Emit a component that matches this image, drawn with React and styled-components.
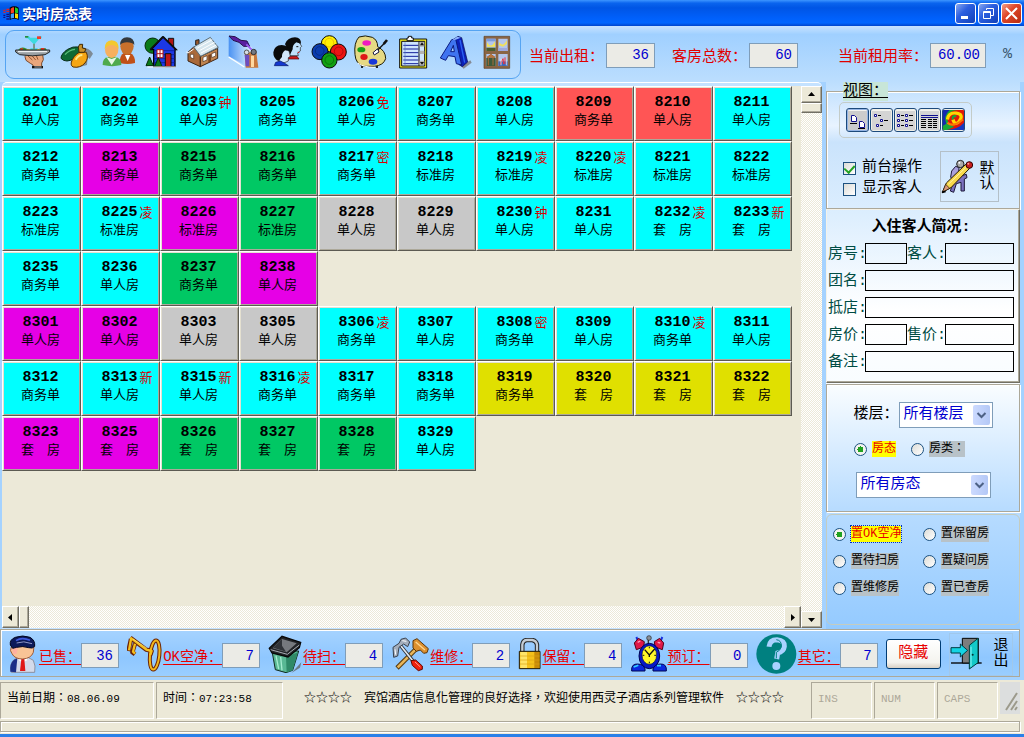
import { useState } from "react";
import styled, { createGlobalStyle, css } from "styled-components";

const TYPES = { D: "单人房", S: "商务单", B: "标准房", T: "套　房" };

const COLORS = {
  free: "#00ffff",
  sold: "#e600e6",
  clean: "#00c864",
  alert: "#ff5555",
  dirty: "#c8c8c8",
  booked: "#e0e000",
};

const floors = [
  [
    ["8201", "D"], ["8202", "S"], ["8203", "D", "free", "钟"], ["8205", "S"], ["8206", "D", "free", "免"],
    ["8207", "S"], ["8208", "D"], ["8209", "S", "alert"], ["8210", "D", "alert"], ["8211", "D"],
    ["8212", "S"], ["8213", "S", "sold"], ["8215", "S", "clean"], ["8216", "S", "clean"], ["8217", "S", "free", "密"],
    ["8218", "B"], ["8219", "B", "free", "凌"], ["8220", "B", "free", "凌"], ["8221", "B"], ["8222", "B"],
    ["8223", "B"], ["8225", "B", "free", "凌"], ["8226", "B", "sold"], ["8227", "B", "clean"], ["8228", "D", "dirty"],
    ["8229", "D", "dirty"], ["8230", "D", "free", "钟"], ["8231", "D"], ["8232", "T", "free", "凌"], ["8233", "T", "free", "新"],
    ["8235", "S"], ["8236", "D"], ["8237", "S", "clean"], ["8238", "D", "sold"],
  ],
  [
    ["8301", "D", "sold"], ["8302", "D", "sold"], ["8303", "D", "dirty"], ["8305", "D", "dirty"], ["8306", "S", "free", "凌"],
    ["8307", "D"], ["8308", "S", "free", "密"], ["8309", "D"], ["8310", "S", "free", "凌"], ["8311", "D"],
    ["8312", "S"], ["8313", "D", "free", "新"], ["8315", "D", "free", "新"], ["8316", "S", "free", "凌"], ["8317", "S"],
    ["8318", "S"], ["8319", "S", "booked"], ["8320", "T", "booked"], ["8321", "T", "booked"], ["8322", "T", "booked"],
    ["8323", "T", "sold"], ["8325", "T", "sold"], ["8326", "T", "clean"], ["8327", "T", "clean"], ["8328", "T", "clean"],
    ["8329", "D"],
  ],
];

/* ---------- icons ---------- */

const FlagIcon = () => (
  <svg width="17" height="16" viewBox="3 12 51 48">
    <path d="M26 20Q40 12 53 20V57Q40 49 26 57Z" fill="#000" />
    <path d="M29 23Q34 19 39 19V35Q34 35 29 38Z" fill="#ff4020" />
    <path d="M42 19Q46 20 51 23V37Q46 35 42 35Z" fill="#20d020" />
    <path d="M29 40Q34 37 39 37V51Q34 51 29 53Z" fill="#40a0ff" />
    <path d="M42 37Q46 37 51 39V53Q46 51 42 51Z" fill="#ffe000" />
    <path d="M7 28h6m3-3h9M7 34h6m3-3h9" stroke="#e02020" strokeWidth="4" />
    <path d="M7 43h6m3-3h9M7 49h6m3-3h9M16 54h9" stroke="#101080" strokeWidth="4" />
  </svg>
);

const TrayIcon = () => (
  <svg width="36" height="36" viewBox="46 103 108 108">
    <path d="M78 110h10l4 4h20l6-4h8v6h-6l-14 16v14h8v4H92v-4h9v-14L84 116h-6Z" fill="#3ddbe0" />
    <path d="M76 109h10v5H76Z" fill="#2a8c3c" />
    <path d="M112 110h12v8h-12Z" fill="#f03c28" />
    <path d="M101 132h4v16h-4Z" fill="#8a7a60" />
    <path d="M56 150Q62 142 74 144L88 150H114Q124 142 138 146L142 152H56Z" fill="#2f8f2f" />
    <path d="M62 146h8v5h-8ZM124 145h10v6h-10Z" fill="#e03020" />
    <path d="M80 149h10v4H80ZM112 148h10v4h-10Z" fill="#f0d030" />
    <path d="M80 165L76 171 79 182 92 191 100 196V201H126V190L131 180 129 165Z" fill="#e9a67c" stroke="#7c4a2a" strokeWidth="3" />
    <path d="M84 168L98 181M96 167L108 181M109 166L115 180" stroke="#8e5632" strokeWidth="3" />
    <path d="M48 151H150V157L136 165Q98 172 60 165L48 157Z" fill="#9aa0a4" stroke="#26282a" strokeWidth="3" />
    <path d="M55 156H142" stroke="#fff" strokeWidth="3" />
    <path d="M97 199H130V206H97Z" fill="#111" />
    <path d="M104 202H126" stroke="#fff" strokeWidth="2" />
  </svg>
);

const LemonIcon = () => (
  <svg width="36" height="36" viewBox="190 103 108 108">
    <path d="M254 142Q282 144 292 162L282 178 276 172 274 196 240 205 256 180Z" fill="#7e8b96" />
    <path d="M196 176Q196 162 216 149Q232 139 248 142Q260 150 252 162Q236 182 214 184Q202 184 196 176Z" fill="#0e6a34" stroke="#0a2d1a" strokeWidth="3" />
    <path d="M208 165Q220 151 238 149" stroke="#5fc07b" strokeWidth="4" fill="none" />
    <path d="M272 158Q280 176 268 190Q254 206 232 202Q222 196 230 180Q240 160 258 156Z" fill="#f5a614" stroke="#5a3200" strokeWidth="3" />
    <path d="M240 180Q248 166 260 166" stroke="#ffe88a" strokeWidth="6" fill="none" />
    <path d="M248 142L252 134H261L260 145 271 148 266 158H250Z" fill="#c8902a" stroke="#3f2b06" strokeWidth="3" />
  </svg>
);

const PeopleIcon = () => (
  <svg width="36" height="36" viewBox="306 103 108 108">
    <path d="M362 190Q362 168 374 160H394Q409 168 408 190Q386 196 362 190Z" fill="#c05018" />
    <ellipse cx="384" cy="140" rx="20" ry="25" fill="#c8702c" />
    <path d="M363 136Q364 114 384 113Q406 114 406 136Q400 128 384 128Q370 128 363 136Z" fill="#34383c" />
    <path d="M378 166L386 184 394 166Z" fill="#fff" />
    <path d="M311 196Q310 175 328 171H350Q368 177 367 196Q340 203 311 196Z" fill="#4faa4d" />
    <ellipse cx="338" cy="150" rx="20" ry="25" fill="#f6b060" />
    <path d="M317 148Q317 123 338 122Q360 123 359 148Q350 136 338 136Q326 136 317 148Z" fill="#f2c830" />
    <path d="M322 172L338 196 354 172 338 178Z" fill="#e8f8e8" />
  </svg>
);

const HouseIcon = () => (
  <svg width="36" height="36" viewBox="432 103 108 108">
    <circle cx="461" cy="138" r="23" fill="#0a7a18" stroke="#052a08" strokeWidth="3" />
    <path d="M508 116H524V150H508Z" fill="#b01414" stroke="#111" strokeWidth="3" />
    <path d="M492 112L456 150H464V201H528V150H532Z" fill="#1c38e6" stroke="#000" strokeWidth="4" />
    <path d="M464 153H528M464 165H528M464 177H528M464 189H528" stroke="#081684" strokeWidth="2" />
    <path d="M492 111L454 150M492 111L532 151" stroke="#101010" strokeWidth="5" />
    <path d="M474 150H492V174H474Z" fill="#fff" stroke="#b01414" strokeWidth="3" />
    <path d="M483 150V174M474 162H492" stroke="#b01414" strokeWidth="3" />
    <path d="M499 162H516V201H499Z" fill="#c01818" stroke="#111" strokeWidth="3" />
    <path d="M452 172L441 198H463ZM478 174L467 200H489Z" fill="#0a7a18" stroke="#052a08" strokeWidth="3" />
    <path d="M445 202H530" stroke="#fff" strokeWidth="3" />
  </svg>
);

const CabinIcon = () => (
  <svg width="36" height="36" viewBox="558 103 108 108">
    <path d="M590 122V136H600V120Z" fill="#9b5a2c" stroke="#222" strokeWidth="3" />
    <path d="M567 158L584 142 604 166V201L567 184Z" fill="#a9693a" stroke="#3c2413" strokeWidth="3" />
    <path d="M604 170L656 146V176L604 201Z" fill="#c08450" stroke="#3c2413" strokeWidth="3" />
    <path d="M584 142L634 113 658 143 605 170Z" fill="#d6e6ee" stroke="#5c6e78" strokeWidth="3" />
    <path d="M595 145L640 120M601 153L647 128M606 160L652 136" stroke="#fff" strokeWidth="3" />
    <path d="M574 164H584V178L574 173ZM612 173L624 168V181L612 186ZM638 162L650 157V169L638 174Z" fill="#fff" stroke="#4c2c16" strokeWidth="2" />
    <path d="M628 166L636 163V186L628 189Z" fill="#7a431e" />
    <path d="M584 148L567 160 562 157" stroke="#fff" strokeWidth="3" fill="none" />
  </svg>
);

const BrushIcon = () => (
  <svg width="36" height="36" viewBox="688 103 108 108">
    <defs>
      <linearGradient id="sky" x1="0" x2="1">
        <stop offset="0" stopColor="#4a92f2" />
        <stop offset="1" stopColor="#e0f1ff" />
      </linearGradient>
    </defs>
    <path d="M693 110L762 142V198L738 194 693 170Z" fill="url(#sky)" />
    <path d="M693 172L740 202" stroke="#fff" strokeWidth="4" />
    <path d="M694 109L712 111 730 122 748 124 756 140 738 140 724 128 706 122Z" fill="#5a1ea0" stroke="#28104c" strokeWidth="3" />
    <path d="M746 134L762 150" stroke="#9a5cf0" strokeWidth="6" />
    <path d="M741 158H776L782 204H744Z" fill="#c8793c" />
    <path d="M741 166H755V200H744Z" fill="#6c4cc0" />
    <path d="M760 168H769V202H760Z" fill="#ffd9a0" />
    <circle cx="747" cy="158" r="7" fill="#d8dde6" stroke="#555" strokeWidth="3" />
    <circle cx="768" cy="157" r="8" fill="#737983" stroke="#333" strokeWidth="3" />
  </svg>
);

const FacesIcon = () => (
  <svg width="36" height="36" viewBox="14 103 108 108">
    <path d="M78 136Q90 118 106 130L112 140 108 144V154L100 160 102 168H76Z" fill="#bfe0fa" stroke="#222" strokeWidth="2" />
    <path d="M62 133Q70 113 92 113Q111 114 110 132L96 128Q84 136 85 149L78 163 70 152Z" fill="#0a0a0a" />
    <path d="M70 170H98L104 178H72Z" fill="#d01818" stroke="#500" strokeWidth="2" />
    <path d="M50 154Q66 146 74 154L78 170 72 174 72 184 58 190H44Z" fill="#d4e8fb" stroke="#222" strokeWidth="2" />
    <path d="M27 158Q30 137 52 136Q72 138 77 154L62 152Q52 160 53 172L42 184Q26 176 27 158Z" fill="#0a0a0a" />
    <path d="M34 188L48 184 60 190 72 198H30Z" fill="#1438d0" stroke="#061460" strokeWidth="2" />
    <path d="M96 141H102" stroke="#111" strokeWidth="3" />
    <path d="M100 158H105" stroke="#d01818" strokeWidth="3" />
  </svg>
);

const CirclesIcon = () => (
  <svg width="36" height="36" viewBox="145 104 108 108">
    <g stroke="#0a0a0a" strokeWidth="3">
      <circle cx="200" cy="133" r="24" fill="#fff000" />
      <circle cx="172" cy="157" r="24" fill="#0a3cae" />
      <circle cx="227" cy="158" r="24" fill="#ec1414" />
      <circle cx="200" cy="183" r="23" fill="#12a012" />
    </g>
    <g fill="none" strokeWidth="2">
      <circle cx="200" cy="130" r="13" stroke="#e8a800" />
      <circle cx="171" cy="155" r="13" stroke="#062470" />
      <circle cx="228" cy="156" r="13" stroke="#9a0808" />
      <circle cx="200" cy="182" r="13" stroke="#076007" />
    </g>
  </svg>
);

const PaletteIcon = () => (
  <svg width="36" height="36" viewBox="278 104 108 108">
    <path d="M305 206V200M350 200V206" stroke="#000" strokeWidth="5" />
    <path d="M296 113Q314 106 336 114Q352 122 352 142Q376 154 376 178Q370 198 342 201H310Q286 194 284 166Q280 130 296 113Z" fill="#e6d984" stroke="#1c1a08" strokeWidth="3" />
    <path d="M293 192Q310 204 344 204" stroke="#fff" strokeWidth="3" fill="none" />
    <ellipse cx="319" cy="131" rx="13" ry="8" fill="#f01cc0" />
    <ellipse cx="303" cy="151" rx="12" ry="8" fill="#18a018" />
    <ellipse cx="311" cy="173" rx="11" ry="9" fill="#e01818" />
    <ellipse cx="338" cy="187" rx="13" ry="9" fill="#1838d8" />
    <path d="M338 160L352 148 356 158 342 167Z" fill="#fff" stroke="#101040" strokeWidth="3" />
    <path d="M352 152L374 130" stroke="#111" strokeWidth="4" />
    <path d="M370 134L380 122" stroke="#111" strokeWidth="8" />
  </svg>
);

const ClipboardIcon = () => (
  <svg width="36" height="36" viewBox="402 104 108 108">
    <path d="M416 119H497V206H416Z" fill="#f4ee22" stroke="#111" strokeWidth="3" />
    <path d="M422 126H491V200H422Z" fill="#cfe6ff" stroke="#111" strokeWidth="3" />
    <path d="M438 124V116H442V111H452V116H457V124Z" fill="#fff" stroke="#111" strokeWidth="3" />
    <path d="M427 138H472M427 149H472M427 160H472M427 171H472M427 182H472M427 193H472" stroke="#14209a" strokeWidth="3" />
    <path d="M474 126V200" stroke="#111" strokeWidth="3" />
    <path d="M476 128H490V142H476ZM476 154H490V164H476ZM476 184H490V198H476Z" fill="#b4b4b4" />
    <path d="M483 129L489 138H477ZM483 196L489 188H477Z" fill="#111" />
    <path d="M432 129V198" stroke="#5a78c8" strokeWidth="2" />
  </svg>
);

const LetterIcon = () => (
  <svg width="36" height="36" viewBox="528 104 108 108">
    <path d="M600 200L628 183 632 190 608 208Z" fill="#858b95" />
    <path d="M575 122L591 111 602 115 620 188 604 202 594 196Z" fill="#0b20b8" stroke="#060e50" strokeWidth="2" />
    <path d="M538 176L572 121 584 119 602 197 586 193 582 172 562 169 554 183ZM569 157H580L577 138Z" fill="#3f74f0" stroke="#0a1a80" strokeWidth="3" fillRule="evenodd" />
    <path d="M573 123L589 112 599 115 584 121Z" fill="#8eb4ff" />
    <path d="M597 122L611 190" stroke="#2b62f4" strokeWidth="4" />
  </svg>
);

const WindowIcon = () => (
  <svg width="36" height="36" viewBox="640 104 108 108">
    <path d="M655 111H732V207H655Z" fill="#8a6544" stroke="#5c3d22" strokeWidth="2" />
    <path d="M662 118H690V155H662ZM698 118H726V155H698ZM662 164H690V200H662ZM698 164H726V200H698Z" fill="#b4c6ec" />
    <path d="M662 118H690V126H662Z" fill="#7e9cdc" />
    <path d="M664 129Q676 150 688 126V142H664Z" fill="#f4e454" />
    <path d="M662 145H690V155H662Z" fill="#4b5c30" />
    <path d="M700 128Q712 145 724 122V134L712 142 700 138Z" fill="#f2e05c" />
    <path d="M698 146H726V155H698Z" fill="#9fa8dc" />
    <path d="M662 176H690V200H662Z" fill="#3e5a3c" />
    <path d="M664 174H688L676 165ZM668 174V198M682 174V198" fill="#c07840" stroke="#a86c38" strokeWidth="3" />
    <path d="M698 186H726V200H698Z" fill="#4068b8" />
    <path d="M703 196L712 178 714 194M718 174V194" stroke="#e83040" strokeWidth="3" fill="none" />
    <path d="M706 178V198M722 184V198" stroke="#fff" strokeWidth="2" />
  </svg>
);

const DefaultIcon = () => (
  <svg width="34" height="36" viewBox="478 470 102 108">
    <path d="M522 492L510 506 507 524 516 540 530 524 532 496Z" fill="#a9a0dc" stroke="#1c1838" strokeWidth="3" />
    <path d="M532 522L554 516 556 526 548 530V566H538V540L524 544 516 570 506 566 516 536Z" fill="#7c72c0" stroke="#1c1838" strokeWidth="3" />
    <path d="M482 570L494 542 552 486 564 498 508 556Z" fill="#f7d84a" stroke="#201400" strokeWidth="3" />
    <path d="M500 546L556 492" stroke="#fff3a8" strokeWidth="3" />
    <path d="M482 570L492 546 504 558Z" fill="#d89878" stroke="#201400" strokeWidth="2" />
    <path d="M481 570L492 567" stroke="#000" strokeWidth="5" />
    <circle cx="536" cy="485" r="11" fill="#aaa" stroke="#222" strokeWidth="3" />
    <circle cx="533" cy="481" r="3" fill="#fff" />
    <circle cx="563" cy="488" r="10" fill="#c81e1e" stroke="#300" strokeWidth="3" />
    <circle cx="560" cy="484" r="3" fill="#ff9c9c" />
  </svg>
);

const GuestIcon = () => (
  <svg width="30" height="38" viewBox="24 120 90 114">
    <path d="M34 232Q28 206 42 194L58 186H82L100 196Q108 212 104 232Z" fill="#d4daea" stroke="#8a90a0" strokeWidth="3" />
    <path d="M31 230Q28 206 42 194L52 190 48 232Z" fill="#1c2e86" />
    <path d="M58 188L68 196 80 188 82 196 68 202 56 196Z" fill="#fff" />
    <path d="M64 192H73L76 228H60Z" fill="#e01818" />
    <path d="M34 156Q28 168 36 176Q44 192 68 192Q94 190 100 172L102 152Z" fill="#f8c496" stroke="#a05c38" strokeWidth="3" />
    <path d="M36 160Q44 154 54 156L50 176 40 178Z" fill="#ffb0a0" />
    <path d="M31 150Q28 134 46 127Q68 119 90 127Q106 136 104 154Q98 162 86 158Q68 152 50 157L38 160Z" fill="#0c1a5a" stroke="#02061e" strokeWidth="3" />
    <path d="M48 137Q66 125 90 136" stroke="#3e5ae0" strokeWidth="5" fill="none" />
    <path d="M50 144Q70 136 96 146" stroke="#9098c8" strokeWidth="3" fill="none" />
  </svg>
);

const KeyIcon = () => (
  <svg width="35" height="38" viewBox="376 124 105 114">
    <g fill="none" strokeLinejoin="round">
      <path d="M386 132L434 168 450 172 446 184M388 136L380 172M400 150L392 176L400 182" stroke="#6a2208" strokeWidth="13" />
      <ellipse cx="459" cy="184" rx="14" ry="44" stroke="#6a2208" strokeWidth="12" transform="rotate(6 459 184)" />
      <ellipse cx="459" cy="184" rx="14" ry="44" stroke="#f2b81c" strokeWidth="6" transform="rotate(6 459 184)" />
      <path d="M386 132L434 168 450 172 446 184M388 136L382 170M400 150L394 174L400 180" stroke="#f6c01c" strokeWidth="7" />
      <path d="M394 136L436 164" stroke="#fff08c" strokeWidth="2" />
    </g>
  </svg>
);

const BinIcon = () => (
  <svg width="34" height="38" viewBox="30 30 102 114">
    <path d="M108 136L130 112 126 128 100 144Z" fill="#6c7b87" />
    <path d="M42 78L52 134 84 143 104 136 122 78Z" fill="#59b894" stroke="#102820" strokeWidth="3" />
    <path d="M84 96L86 143 104 136 120 82Z" fill="#2f8a68" />
    <path d="M54 92L62 132M68 96L72 136" stroke="#a5ecd0" strokeWidth="4" />
    <path d="M34 70L72 34 128 52 124 68 90 96 42 84Z" fill="#222428" stroke="#08090a" strokeWidth="4" />
    <path d="M44 70L72 42 116 55 86 82Z" fill="#76797e" />
    <path d="M46 68L72 42V62L84 80Z" fill="#303338" />
    <path d="M38 74L88 88 124 60" stroke="#a8acb4" strokeWidth="3" fill="none" />
  </svg>
);

const ToolsIcon = () => (
  <svg width="38" height="36" viewBox="396 38 114 108">
    <path d="M414 134L476 72" stroke="#5a3c0e" strokeWidth="14" />
    <path d="M416 132L476 72" stroke="#e8b55a" strokeWidth="8" />
    <path d="M462 52L474 46 508 76 504 88 494 90 484 80 472 84 462 74Z" fill="#dc9030" stroke="#5a3408" strokeWidth="3" />
    <path d="M470 56L498 80" stroke="#ffd690" strokeWidth="4" />
    <path d="M424 66L466 118" stroke="#30343c" strokeWidth="10" />
    <path d="M424 66L466 118" stroke="#e6eaee" strokeWidth="5" />
    <path d="M426 48L440 44 452 56 446 70 434 62 420 72 416 98 404 102 402 72 420 60Z" fill="#a4aebc" stroke="#38404c" strokeWidth="3" />
    <path d="M430 52L442 54M408 78L410 94" stroke="#fff" strokeWidth="3" />
    <path d="M456 112L470 110 490 128 490 138 478 142 460 126Z" fill="#f02010" stroke="#600800" strokeWidth="3" />
    <path d="M468 116L484 131" stroke="#ff9a8c" strokeWidth="3" />
  </svg>
);

const LockIcon = () => (
  <svg width="23" height="32" viewBox="21 132 69 96">
    <path d="M34 176V152Q36 138 48 138H64Q76 140 78 152V176" fill="none" stroke="#222" strokeWidth="13" />
    <path d="M34 176V152Q36 138 48 138H64Q76 140 78 152V176" fill="none" stroke="#c4ccd4" strokeWidth="7" />
    <path d="M25 172H87V224H25Z" fill="#f5c11a" stroke="#1c1400" strokeWidth="3" />
    <path d="M28 174H48V222H28Z" fill="#ffe468" />
    <path d="M70 174H85V222H70Z" fill="#c88a08" />
    <path d="M27 186H86M27 198H86M27 210H86" stroke="#dba416" strokeWidth="2" />
  </svg>
);

const ClockIcon = () => (
  <svg width="36" height="38" viewBox="356 118 108 114">
    <path d="M408 126V144" stroke="#333" strokeWidth="4" />
    <circle cx="410" cy="127" r="7" fill="#8a9098" stroke="#222" strokeWidth="2" />
    <path d="M372 124L378 138M450 124L444 138" stroke="#1830e0" strokeWidth="6" />
    <path d="M366 142L378 128 396 138 394 154 372 162ZM454 142L442 128 426 138 428 154 450 162Z" fill="#e01848" stroke="#500018" strokeWidth="3" />
    <path d="M376 140L384 136M436 140L444 142" stroke="#ff9ab8" strokeWidth="4" />
    <ellipse cx="411" cy="181" rx="31" ry="38" fill="#0818c8" stroke="#000450" strokeWidth="3" />
    <ellipse cx="411" cy="178" rx="22" ry="28" fill="#fff62a" stroke="#04104c" strokeWidth="2" />
    <path d="M397 162L411 178 427 160M411 178V184" stroke="#111" strokeWidth="4" fill="none" />
    <path d="M411 153V158M411 198V203M391 179H396M426 179H431" stroke="#111" strokeWidth="3" />
    <path d="M358 226Q356 204 376 205Q394 206 398 220V226ZM462 226Q464 204 444 205Q426 206 422 220V226Z" fill="#0a28e0" stroke="#000450" strokeWidth="3" />
    <path d="M364 214L378 209M434 210L446 210" stroke="#36d4ff" strokeWidth="5" />
  </svg>
);

const HelpIcon = () => (
  <svg width="41" height="40" viewBox="13 115 123 120">
    <ellipse cx="74" cy="175" rx="60" ry="59" fill="#008080" />
    <path d="M52 153Q54 132 76 132Q99 134 98 152Q96 168 78 172L75 190" fill="none" stroke="#a8d2ff" strokeWidth="15" />
    <path d="M74 132Q90 134 89 152Q86 166 74 170V188" fill="none" stroke="#008080" strokeWidth="3" />
    <circle cx="74" cy="211" r="12" fill="#a8d2ff" />
  </svg>
);

const ExitIcon = () => (
  <svg width="34" height="36" viewBox="595 122 102 108">
    <path d="M598 203H690" stroke="#000" strokeWidth="4" />
    <path d="M632 129H680V203H632Z" fill="#7d7d7d" stroke="#000" strokeWidth="3" />
    <path d="M653 150L679 129V202L653 221Z" fill="#12c8c8" stroke="#003c3c" strokeWidth="3" />
    <path d="M658 154V214" stroke="#8ff8f8" strokeWidth="3" />
    <circle cx="663" cy="178" r="3" fill="#033" />
    <path d="M598 157H626V146L648 165 626 185V173H598Z" fill="#14d4e4" stroke="#003c44" strokeWidth="3" />
  </svg>
);

const page = (x, y) => `M${x} ${y}h3l2 2v4h-5Z`;

const BigViewIcon = () => (
  <svg width="19" height="19" viewBox="0 0 19 19">
    <path d="M0 0H19V19H0Z" fill="#ccc" />
    <path d={page(3.5, 4.5) + page(11.5, 10.5)} fill="#fff" stroke="#101090" />
    <path d="M2 12.5H9M10 17.5H17" stroke="#000" />
  </svg>
);

const SmallViewIcon = () => (
  <svg width="19" height="19" viewBox="0 0 19 19">
    <path d="M0 0H19V19H0Z" fill="#d4d4d4" />
    <path d="M2.5 3.5h2v2h-2ZM8.5 8.5h2v2h-2ZM4.5 13.5h2v2h-2Z" fill="#fff" stroke="#101090" />
    <path d="M6 4.500h3M12 9.500h4M8 14.500h3" stroke="#000" />
  </svg>
);

const ListViewIcon = () => (
  <svg width="19" height="19" viewBox="0 0 19 19">
    <path d="M0 0H19V19H0Z" fill="#d4d4d4" />
    <path d="M1.500 3.500h2v2h-2Zm8 0h2v2h-2ZM1.500 8.500h2v2h-2Zm8 0h2v2h-2ZM1.500 13.500h2v2h-2Zm8 0h2v2h-2Z" fill="#fff" stroke="#101090" />
    <path d="M5 4.500h3m5 0h4M5 9.500h3m5 0h4M5 14.500h3m5 0h4" stroke="#000" />
  </svg>
);

const DetailViewIcon = () => (
  <svg width="19" height="19" viewBox="0 0 19 19">
    <path d="M0 0H19V19H0Z" fill="#d4d4d4" />
    <path d="M1 4.500H18M1 6.500H18" stroke="#101090" />
    <path d="M1 8.500h5m2 0h4m1 0h4M1 10.500h5m2 0h4m1 0h4M1 12.500h5m2 0h4m1 0h4M1 14.500h5m2 0h4m1 0h4M1 16.500h5m2 0h4m1 0h4" stroke="#000" />
  </svg>
);

const SwirlIcon = () => (
  <svg width="21" height="20" viewBox="0 0 19 19" preserveAspectRatio="none">
    <path d="M0 0H19V19H0Z" fill="#e01808" />
    <path d="M0 0H13Q5 1 4 7T10 16L4 19H0Z" fill="#18a838" />
    <path d="M0 0H6Q0 6 3 13L0 15Z" fill="#1428b0" />
    <path d="M4 9Q5 2 12 3T15 10 9 9" fill="none" stroke="#ffd800" strokeWidth="3" />
    <path d="M9 9Q8 5 12 6" fill="none" stroke="#18a838" strokeWidth="2" />
    <path d="M3 19Q14 18 19 12V19Z" fill="#1838c0" />
    <path d="M4 12Q9 17 18 9" fill="none" stroke="#ff7800" strokeWidth="2" />
  </svg>
);

/* ---------- shared parts ---------- */

const cjk = `"Noto Sans CJK SC", sans-serif`;
const mono = `"Liberation Mono", "Noto Sans CJK SC", monospace`;
/* centred punctuation for the small captions */
const small = `"Liberation Mono", "Noto Sans CJK TC", monospace`;

const GlobalStyle = createGlobalStyle`
  * {
    box-sizing: border-box;
  }

  body {
    margin: 0;
    font-family: ${mono};
    font-size: 15px;
    line-height: 18px;
    background: #ece9d8;
  }

  button, input, select {
    font: inherit;
    margin: 0;
    padding: 0;
  }

  svg {
    display: block;
    flex: none;
  }
`;

const Window = styled.div`
  min-height: 100vh;
  min-width: 1020px;
  display: flex;
  flex-direction: column;
  background: #a4d2ff;
  border-bottom: 3px solid #2a80e8;
`;

/* title bar */
const TitleBar = styled.header`
  height: 26px;
  display: flex;
  align-items: center;
  gap: 3px;
  padding: 0 2px;
  background: linear-gradient(#3d95ff 0, #0a64ee 12%, #0055e5 30%, #0060fb 70%, #0066ff 88%, #0045cc);

  h1 {
    flex: 1;
    margin: 0;
    font: bold 14px/20px ${cjk};
    color: #fff;
    text-shadow: 1px 1px #0a1883;
  }
`;

const WindowButton = styled.button`
  width: 21px;
  height: 21px;
  display: grid;
  place-items: center;
  border: 1px solid #fff;
  border-radius: 3px;
  background: ${({ $close }) =>
    $close
      ? "linear-gradient(135deg, #f0a088, #e0482a 40%, #b82c10)"
      : "linear-gradient(135deg, #88a8f0, #2c5fe0 40%, #1040b8)"};
`;

const WindowButtons = styled.div`
  display: flex;
  gap: 2px;
`;

/* tools and the three counters */
const TopBar = styled.div`
  height: 56px;
  display: flex;
  align-items: center;
  padding: 0 12px 0 5px;
  background: linear-gradient(#c8e3ff 0, #a0d0ff 15%, #bcdefe);
`;

const Toolbar = styled.nav`
  height: 49px;
  display: flex;
  align-items: center;
  padding: 0 2px 4px 4px;
  border: 1px solid #55a4f2;
  border-radius: 9px;
`;

const ToolButton = styled.button`
  width: ${({ $wide }) => ($wide ? 46 : 42)}px;
  height: 42px;
  display: grid;
  place-items: center;
  border: 0;
  background: none;
`;

const Counters = styled.div`
  flex: 1;
  display: flex;
  align-items: center;
  gap: 17px;
  padding: 2px 0 0 8px;
`;

const Counter = styled.label`
  display: flex;
  align-items: center;
  gap: 2px;
  white-space: nowrap;
  color: #e00000;
  ${({ $push }) => $push && "margin-left: auto;"}

  span {
    padding-top: 6px;
  }
`;

const ValueBox = styled.input`
  width: ${({ $w }) => $w || 38}px;
  height: 25px;
  padding: 0 5px !important;
  border: 1px solid #7f9db9;
  border-radius: 0;
  background: #ebebe6;
  color: #0000d0;
  font-size: 14px !important;
  text-align: right;
`;

const Percent = styled.span`
  color: #38546c;
`;

/* rooms */
const Main = styled.main`
  flex: 1;
  display: grid;
  grid-template-columns: 1fr 194px;
  gap: 4px;
  padding: 0 4px 0 2px;
`;

const RoomPane = styled.section`
  display: grid;
  grid-template-columns: 1fr 21px;
  grid-template-rows: 1fr 22px;
  padding: 3px 0 1px;
  border-top: 1px solid #fff;
  border-radius: 5px 5px 0 0;
  background: #c4e2ff;
`;

const RoomView = styled.div`
  padding-right: 9px;
  background: #ece9d8;
`;

const Floor = styled.div`
  display: grid;
  grid-template-columns: repeat(10, minmax(0, 1fr));
`;

const Room = styled.button`
  height: 55px;
  display: grid;
  grid-template-columns: 1fr auto 1fr;
  grid-template-rows: 16px 18px;
  align-content: start;
  padding: 8px 2px 0 0 !important;
  border: 1px solid;
  border-color: #fff #5c5a52 #5c5a52 #fff;
  box-shadow: inset 1px 1px #e4e0d0, inset -1px -1px #aca899;
  background: ${({ $status }) => COLORS[$status]};
  color: #000;

  strong {
    grid-column: 2;
    font: bold 15px/16px "Liberation Mono", monospace;
  }

  em {
    padding-left: 2px;
    font: 13px/18px ${mono};
    text-align: left;
    color: #d80000;
  }

  span {
    grid-column: 1 / -1;
    grid-row: 2;
    font: 13px/20px ${mono};
  }
`;

const Scrollbar = styled.div`
  display: flex;
  flex-direction: ${({ $vertical }) => ($vertical ? "column" : "row")};
  grid-row: ${({ $vertical }) => ($vertical ? "1 / 3" : "2")};
  grid-column: ${({ $vertical }) => ($vertical ? "2" : "1")};
  background: conic-gradient(#fff 25%, #ece9d8 0 50%, #fff 0 75%, #ece9d8 0) 0 0 / 2px 2px;
`;

const raised = css`
  border: 1px solid;
  border-color: #fff #716f64 #716f64 #fff;
  box-shadow: inset -1px -1px #aca899;
  background: #ece9d8;
`;

const ScrollButton = styled.button`
  flex: none;
  min-width: 17px;
  min-height: 17px;
  display: grid;
  place-items: center;
  ${raised}
`;

const Thumb = styled.div`
  flex: 0 0 10px;
  margin-${({ $vertical }) => ($vertical ? "bottom" : "right")}: auto;
  ${raised}
`;

/* side panels */
const Sidebar = styled.aside`
  display: flex;
  flex-direction: column;
  background: linear-gradient(
    #bcdefe 0,
    #e8f3ff 8%,
    #cae3fc 11%,
    #dceefe 24%,
    #fff 42%,
    #f8fcff 56%,
    #b8dcff 78%,
    #94caff
  );
`;

const etched = css`
  border: 1px solid #aca899;
  box-shadow: inset 1px 1px #fff, 1px 1px #fff;
`;

const ViewPanel = styled.fieldset`
  height: 127px;
  min-width: 0;
  margin: 0;
  padding: 1px 12px 0;
  ${etched}

  legend {
    margin-left: 4px;
    padding: 0;
    line-height: 19px;
    background: #c8e6d8;
    text-decoration: underline;
    text-underline-offset: 2px;
  }
`;

const ViewButtons = styled.div`
  width: 133px;
  height: 36px;
  display: flex;
  align-items: center;
  justify-content: center;
  gap: 1px;
  border: 1px solid #c4ccc8;
  border-radius: 5px;
`;

const ViewButton = styled.button`
  width: 23px;
  height: 24px;
  display: grid;
  place-items: center;
  overflow: hidden;
  border: 1px solid #1c4a7c;
  border-radius: 3px;
  box-shadow: inset 0 0 0 1px ${({ $active }) => ($active ? "#94b4e4" : "#f0efe6")};
  background: #f4f3ee;
`;

const ViewOptions = styled.div`
  display: flex;
  justify-content: space-between;
  padding: 13px 8px 0 4px;
`;

const Checks = styled.div`
  display: grid;
  align-content: start;
  gap: 3px;
  padding-top: 8px;

  label {
    display: flex;
    align-items: center;
    gap: 6px;
  }
`;

const Check = styled.input`
  appearance: none;
  width: 13px;
  height: 13px;
  display: grid;
  place-items: center;
  border: 1px solid #1c5180;
  background: linear-gradient(135deg, #dcdcd7, #fff);

  &:checked::before {
    content: "";
    width: 5px;
    height: 8px;
    margin-bottom: 2px;
    border: solid #21a121;
    border-width: 0 2px 2px 0;
    transform: rotate(42deg);
  }
`;

const FlatButton = styled.button`
  width: ${({ $w }) => $w}px;
  height: ${({ $h }) => $h}px;
  display: flex;
  align-items: center;
  justify-content: space-between;
  padding: 0 3px 0 0 !important;
  border: 1px solid ${({ $line }) => $line || "#b4c0c8"};
  background: none;
  color: #000;
  line-height: 15px;

  span {
    width: 16px;
  }
`;

const GuestPanel = styled.section`
  height: 174px;
  padding: 9px 5px 0 1px;
  border: 1px solid;
  border-color: #f4f2e8 #716f64 #716f64 #f4f2e8;
  box-shadow: inset -1px -1px #aca899;

  h2 {
    margin: 0 0 6px;
    font: bold 15px/18px ${mono};
    text-align: center;
  }
`;

const GuestForm = styled.form`
  display: grid;
  grid-template-columns: 37px 42px 38px 1fr;
  row-gap: 6px;
  color: #004c44;

  label {
    line-height: 24px;
    height: 21px;
    white-space: nowrap;
  }
`;

const GuestInput = styled.input`
  width: 100%;
  height: 21px;
  border: 1px solid #000;
  border-radius: 0;
  background: none;
  ${({ $wide }) => $wide && "grid-column: 2 / -1;"}
`;

const FilterPanel = styled.section`
  height: 128px;
  display: grid;
  justify-items: center;
  align-content: start;
  gap: 11px;
  margin-top: 1px;
  padding-top: 17px;
  ${etched}
`;

const FilterRow = styled.label`
  display: flex;
  align-items: center;
`;

const SelectBox = styled.div`
  width: ${({ $w }) => $w}px;
  height: 26px;
  display: grid;
  grid-template-columns: 1fr 17px;
  padding: 2px;
  border: 1px solid #7f9db9;
  background: #fff;

  select {
    grid-area: 1 / 1 / 2 / 3;
    appearance: none;
    padding-left: 2px;
    border: 0;
    background: none;
    color: #0000d0;
  }

  svg {
    grid-area: 1 / 2;
    border-radius: 2px;
    background: linear-gradient(90deg, #ccdaff, #b4c8f6);
    pointer-events: none;
  }
`;

const Radio = styled.input`
  appearance: none;
  flex: none;
  width: 13px;
  height: 13px;
  border: 1px solid #1c5180;
  border-radius: 50%;
  background: ${({ checked }) =>
    checked
      ? "radial-gradient(circle, #21a121 0 3px, #f4f4f0 3px)"
      : "linear-gradient(135deg, #dcdcd7, #fff)"};
`;

const RadioLabel = styled.label`
  display: flex;
  align-items: center;
  gap: 5px;
  font: 12px/16px ${small};

  span {
    white-space: nowrap;
    background: ${({ $on }) => ($on ? "#ffff00" : "#b8c2c8")};
    color: ${({ $on }) => ($on ? "#e80000" : "#000")};
    outline: ${({ $focus }) => ($focus ? "1px dotted #0030c0" : "none")};
  }
`;

const KindRow = styled.div`
  width: 124px;
  display: flex;
  gap: 15px;
  padding: 2px 0 4px;
  justify-self: start;
  margin-left: 27px;
`;

const ActionPanel = styled.section`
  height: 111px;
  display: grid;
  grid-template-columns: 90px 90px;
  align-content: start;
  row-gap: 11px;
  margin-top: 2px;
  padding: 11px 0 0 6px;
  border: 1px solid #c4ccc0;
  border-radius: 6px;
`;

/* room totals */
const SummaryBar = styled.section`
  height: 48px;
  display: flex;
  align-items: center;
  justify-content: space-between;
  margin: 0 4px 3px 0;
  padding: 2px 6px 0 7px;
  border: 1px solid #aca899;
  box-shadow: inset 1px 1px #fff;
  background: linear-gradient(#a6d3ff, #8fc7ff 60%, #9aceff);
`;

const Summary = styled.div`
  display: flex;
  align-items: center;
  gap: 1px;

  label {
    display: flex;
    align-items: center;
    padding-top: 3px;
  }

  a {
    padding-top: 3px;
    font-size: 14px;
    color: #e80000;
    white-space: nowrap;
    text-decoration: underline 1px #e80000;
    text-underline-offset: 3px;
  }
`;

const HideButton = styled.button`
  width: 55px;
  height: 30px;
  border: 1px solid #003c74;
  border-radius: 3px;
  background: linear-gradient(#fff, #f4f3ee 80%, #d8d0c4);
  color: #e80000;
`;

/* status bar */
const StatusBar = styled.footer`
  height: 40px;
  display: flex;
  gap: 2px;
  padding: 2px 4px 0 0;
  background: #ece9d8;
  font: 12px/18px ${small};
`;

const StatusCell = styled.div`
  width: ${({ $w }) => $w}px;
  height: 37px;
  padding: 0 6px;
  line-height: 32px;
  white-space: nowrap;
  border: 1px solid;
  border-color: #aca899 #fff #fff #aca899;
  color: ${({ $dim }) => ($dim ? "#aca899" : "#000")};

  span {
    font-size: 11px;
  }
`;

const Slogan = styled.p`
  flex: 1;
  margin: 0;
  padding-right: 6px;
  line-height: 34px;
  text-align: center;
  white-space: nowrap;
`;

const BottomStrip = styled.div`
  height: 14px;
  padding: 1px 4px 2px 0;
  background: #ece9d8;

  div {
    height: 11px;
    ${etched}
  }
`;

const tools = [
  ["送餐", TrayIcon], ["水果", LemonIcon], ["客人", PeopleIcon], ["客房", HouseIcon],
  ["房屋", CabinIcon], ["清洁", BrushIcon], ["会员", FacesIcon], ["颜色", CirclesIcon],
  ["调色", PaletteIcon], ["记录", ClipboardIcon], ["字体", LetterIcon], ["窗口", WindowIcon],
];

const views = [
  ["大图标", BigViewIcon], ["小图标", SmallViewIcon], ["列表", ListViewIcon],
  ["详细", DetailViewIcon], ["彩色", SwirlIcon],
];

const totals = [
  ["已售：", "36", GuestIcon], ["OK空净：", "7", KeyIcon], ["待扫：", "4", BinIcon],
  ["维修：", "2", ToolsIcon], ["保留：", "4", LockIcon], ["预订：", "0", ClockIcon],
  ["其它：", "7", HelpIcon],
];

const actions = ["置OK空净", "置保留房", "置待扫房", "置疑问房", "置维修房", "置已查房"];

const Arrow = ({ d }) => (
  <svg width="7" height="7" viewBox="0 0 7 7">
    <path d={d} fill="#000" />
  </svg>
);

const Chevron = () => (
  <svg width="17" height="20" viewBox="0 0 17 20">
    <path d="M4.500 8L8.500 12 12.500 8" fill="none" stroke="#4d6185" strokeWidth="2" />
  </svg>
);

const App = () => {
  const [front, setFront] = useState(true);
  const [guests, setGuests] = useState(false);
  const [kind, setKind] = useState("房态");
  const [action, setAction] = useState(actions[0]);

  return (
    <Window>
      <GlobalStyle />
      <TitleBar>
        <FlagIcon />
        <h1>实时房态表</h1>
        <WindowButtons>
          <WindowButton aria-label="最小化">
            <svg width="13" height="13" viewBox="0 0 13 13"><path d="M2 9H9V12H2Z" fill="#fff" /></svg>
          </WindowButton>
          <WindowButton aria-label="还原">
            <svg width="13" height="13" viewBox="0 0 13 13">
              <path d="M4.500 3V1.500H11.500V8.500H9M1.500 4.500H8.500V11.500H1.500Z M1 5.500H9" fill="none" stroke="#fff" />
            </svg>
          </WindowButton>
          <WindowButton $close aria-label="关闭">
            <svg width="13" height="13" viewBox="0 0 13 13"><path d="M1 1L12 12M12 1L1 12" stroke="#fff" strokeWidth="2" /></svg>
          </WindowButton>
        </WindowButtons>
      </TitleBar>

      <TopBar>
        <Toolbar>
          {tools.map(([name, Icon], i) => (
            <ToolButton key={name} aria-label={name} $wide={i === 0}>
              <Icon />
            </ToolButton>
          ))}
        </Toolbar>
        <Counters>
          <Counter><span>当前出租：</span><ValueBox $w={49} readOnly value="36" /></Counter>
          <Counter><span>客房总数：</span><ValueBox $w={49} readOnly value="60" /></Counter>
          <Counter $push><span>当前租用率：</span><ValueBox $w={56} readOnly value="60.00" /></Counter>
          <Percent>%</Percent>
        </Counters>
      </TopBar>

      <Main>
        {/* room map */}
        <RoomPane>
          <RoomView>
            {floors.map((rooms, i) => (
              <Floor key={i}>
                {rooms.map(([no, type, status = "free", note]) => (
                  <Room key={no} $status={status}>
                    <strong>{no}</strong>
                    {note && <em>{note}</em>}
                    <span>{TYPES[type]}</span>
                  </Room>
                ))}
              </Floor>
            ))}
          </RoomView>
          <Scrollbar $vertical>
            <ScrollButton aria-label="向上"><Arrow d="M0 5L3.500 1 7 5Z" /></ScrollButton>
            <Thumb $vertical />
            <ScrollButton aria-label="向下"><Arrow d="M0 2L3.500 6 7 2Z" /></ScrollButton>
          </Scrollbar>
          <Scrollbar>
            <ScrollButton aria-label="向左"><Arrow d="M5 0L1 3.500 5 7Z" /></ScrollButton>
            <Thumb />
            <ScrollButton aria-label="向右"><Arrow d="M2 0L6 3.500 2 7Z" /></ScrollButton>
          </Scrollbar>
        </RoomPane>

        <Sidebar>
          <ViewPanel>
            <legend>视图：</legend>
            <ViewButtons>
              {views.map(([name, Icon], i) => (
                <ViewButton key={name} aria-label={name} $active={i === 0}>
                  <Icon />
                </ViewButton>
              ))}
            </ViewButtons>
            <ViewOptions>
              <Checks>
                <label>
                  <Check type="checkbox" checked={front} onChange={() => setFront(!front)} />
                  前台操作
                </label>
                <label>
                  <Check type="checkbox" checked={guests} onChange={() => setGuests(!guests)} />
                  显示客人
                </label>
              </Checks>
              <FlatButton $w={59} $h={51}>
                <DefaultIcon />
                <span>默认</span>
              </FlatButton>
            </ViewOptions>
          </ViewPanel>

          {/* guest summary */}
          <GuestPanel>
            <h2>入住客人简况:</h2>
            <GuestForm>
              <label htmlFor="room">房号:</label>
              <GuestInput id="room" />
              <label htmlFor="guest">客人:</label>
              <GuestInput id="guest" />
              <label htmlFor="group">团名:</label>
              <GuestInput id="group" $wide />
              <label htmlFor="arrive">抵店:</label>
              <GuestInput id="arrive" $wide />
              <label htmlFor="price">房价:</label>
              <GuestInput id="price" />
              <label htmlFor="sale">售价:</label>
              <GuestInput id="sale" />
              <label htmlFor="memo">备注:</label>
              <GuestInput id="memo" $wide />
            </GuestForm>
          </GuestPanel>

          {/* filters */}
          <FilterPanel>
            <FilterRow>
              楼层：
              <SelectBox $w={94}>
                <select><option>所有楼层</option></select>
                <Chevron />
              </SelectBox>
            </FilterRow>
            <KindRow>
              {["房态", "房类："].map((name) => (
                <RadioLabel key={name} $on={kind === name}>
                  <Radio type="radio" name="kind" checked={kind === name} onChange={() => setKind(name)} />
                  <span>{name}</span>
                </RadioLabel>
              ))}
            </KindRow>
            <SelectBox $w={135}>
              <select aria-label="房态"><option>所有房态</option></select>
              <Chevron />
            </SelectBox>
          </FilterPanel>

          <ActionPanel>
            {actions.map((name) => (
              <RadioLabel key={name} $on={action === name} $focus={action === name}>
                <Radio type="radio" name="action" checked={action === name} onChange={() => setAction(name)} />
                <span>{name}</span>
              </RadioLabel>
            ))}
          </ActionPanel>
        </Sidebar>
      </Main>

      <SummaryBar>
        {totals.map(([name, value, Icon]) => (
          <Summary key={name}>
            <Icon />
            <label>
              <a href="#rooms">{name}</a>
              <ValueBox readOnly value={value} />
            </label>
          </Summary>
        ))}
        <HideButton>隐藏</HideButton>
        <FlatButton $w={64} $h={43} $line="#a0c8ec">
          <ExitIcon />
          <span>退出</span>
        </FlatButton>
      </SummaryBar>

      <StatusBar>
        <StatusCell $w={154}>当前日期：<span>08.06.09</span></StatusCell>
        <StatusCell $w={127}>时间：<span>07:23:58</span></StatusCell>
        <Slogan>☆☆☆☆　宾馆酒店信息化管理的良好选择，欢迎使用西灵子酒店系列管理软件　☆☆☆☆</Slogan>
        <StatusCell $w={61} $dim><span>INS</span></StatusCell>
        <StatusCell $w={61} $dim><span>NUM</span></StatusCell>
        <StatusCell $w={61} $dim><span>CAPS</span></StatusCell>
        <svg width="20" height="36" viewBox="0 0 20 36">
          <path d="M0 0H20V32H0Z" fill="#dcdede" />
          <path d="M6 28L17 11M11 28L17 19M15 28L17 25" stroke="#9c9a8c" strokeWidth="2" />
        </svg>
      </StatusBar>
      <BottomStrip><div /></BottomStrip>
    </Window>
  );
};

export default App;
